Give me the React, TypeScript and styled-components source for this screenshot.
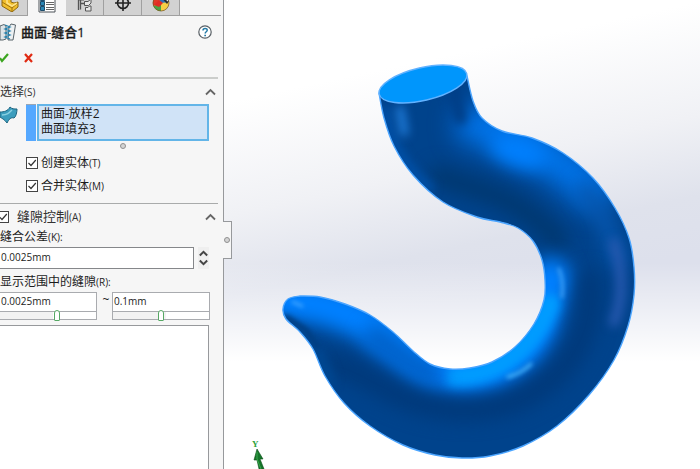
import React, { useState } from "react";
import styled, { createGlobalStyle } from "styled-components";

const GlobalStyle = createGlobalStyle`
  * { box-sizing: border-box; }
  body {
    margin: 0;
    background: #fff;
    color: #1c1c1c;
    font-family: "Open Sans", "Noto Sans CJK SC", sans-serif;
    font-size: 12px;
    line-height: 16px;
  }
  button, input { font: inherit; color: inherit; }
  ul { list-style: none; margin: 0; padding: 0; }
`;

const Page = styled.div`
  display: flex;
  min-height: 100vh;
  overflow: hidden;
`;

const Panel = styled.aside`
  flex: 0 0 224px;
  display: flex;
  flex-direction: column;
  background: #f6f6f6;
  border-right: 1px solid #97999c;
`;

const TabBar = styled.div`
  display: flex;
  height: 16px;
  margin-right: 2px;
`;

const Tab = styled.button<{ $active?: boolean; $first?: boolean }>`
  flex: 0 0 ${(p) => (p.$first ? 28 : 38)}px;
  display: flex;
  justify-content: ${(p) => (p.$first ? "flex-start" : "center")};
  align-items: flex-end;
  padding: 0 0 3px;
  overflow: hidden;
  border: 0;
  border-right: ${(p) => (p.$active ? 0 : 1)}px solid #a0a0a0;
  border-bottom: ${(p) => (p.$active ? 0 : 1)}px solid #a0a0a0;
  background: ${(p) => (p.$active ? "transparent" : "#d2d2d2")};
  svg { flex: none; }
`;

const TabFiller = styled.div`
  flex: 1;
  border-bottom: 1px solid #a0a0a0;
`;

const TitleRow = styled.header`
  display: flex;
  align-items: center;
  height: 32px;
  padding-right: 11px;
`;

const Title = styled.h1`
  flex: 1;
  margin: 0 0 0 5px;
  font-size: 13px;
  line-height: 16px;
  font-weight: 500;
  -webkit-text-stroke: 0.3px currentColor;
`;

const IconButton = styled.button`
  display: flex;
  padding: 0;
  border: 0;
  background: none;
`;

const Confirm = styled.div`
  display: flex;
  align-items: center;
  gap: 15px;
  height: 20px;
`;

const Section = styled.section<{ $strong?: boolean; $grow?: boolean }>`
  display: flex;
  flex-direction: column;
  flex: ${(p) => (p.$grow ? 1 : "none")};
  margin-top: 9px;
  margin-right: 5px;
  border-top: ${(p) => (p.$strong ? "2px solid #cbcdcb" : "1px solid #a9abab")};
`;

const SectionHead = styled.div`
  display: flex;
  align-items: center;
  height: 25px;
  padding-right: 2px;
`;

const SectionTitle = styled.h2`
  flex: 1;
  margin: 0;
  font-size: 12px;
  line-height: 16px;
  font-weight: 400;
  color: #333;
`;

const Key = styled.span`
  font-size: 10px;
`;

const SelectionRow = styled.div`
  display: flex;
  padding-right: 9px;
`;

const SurfaceSlot = styled.div`
  flex: 0 0 26px;
  padding-top: 2px;
`;

const Swatch = styled.div`
  flex: 0 0 10px;
  margin-right: 1px;
  background: #55a8ff;
  border-top: 1px solid #9aa6b4;
`;

const SelectionList = styled.ul`
  flex: 1;
  height: 37px;
  padding: 0 2px;
  border: 2px solid #63b5e8;
  background: #d0e3f7;
  line-height: 15px;
`;

const Grip = styled.div`
  display: flex;
  justify-content: center;
  padding: 2px 0 0 27px;
`;

const Dot = styled.span`
  width: 6px;
  height: 6px;
  border: 1px solid #909090;
  border-radius: 50%;
  background: #d4d4d4;
`;

const CheckList = styled.div`
  display: flex;
  flex-direction: column;
  gap: 7px;
  margin-top: 6px;
  padding-left: 26px;
`;

const CheckLabel = styled.label<{ $head?: boolean }>`
  display: flex;
  align-items: center;
  gap: ${(p) => (p.$head ? 8 : 3)}px;
  font-size: ${(p) => (p.$head ? 13 : 12)}px;
  color: ${(p) => (p.$head ? "#333" : "inherit")};
`;

const Check = styled.input`
  appearance: none;
  flex: none;
  width: 12px;
  height: 12px;
  margin: 0;
  border: 1px solid #444;
  background: #fff;
  &:checked {
    background: #fff
      url("data:image/svg+xml,%3Csvg xmlns='http://www.w3.org/2000/svg' viewBox='0 0 10 10'%3E%3Cpath d='M1.5 5L4 7.5L8.8 2' fill='none' stroke='%23333' stroke-width='1.2'/%3E%3C/svg%3E");
  }
`;

const CheckHeadSlot = styled.div`
  flex: 1;
  margin-left: -3px;
`;

const FieldLabel = styled.label`
  display: block;
  height: 18px;
`;

const SpinRow = styled.div`
  display: flex;
  gap: 4px;
  margin-bottom: 5px;
  padding-right: 9px;
`;

const TextField = styled.input<{ $ranged?: boolean }>`
  display: block;
  flex: 1;
  width: 100%;
  min-width: 0;
  height: ${(p) => (p.$ranged ? 19 : 22)}px;
  padding: 0 1px 3px;
  border: 1px solid #8b8d90;
  border-width: ${(p) => (p.$ranged ? "0 0 1px" : "1px")};
  border-left-width: 0;
  border-color: ${(p) => (p.$ranged ? "#a9abaf" : "#85878a")};
  background: #fff;
  font-size: 10px;
  outline: 0;
`;

const Spinner = styled.div`
  flex: 0 0 11px;
  display: flex;
  flex-direction: column;
  justify-content: space-evenly;
  align-items: center;
  background: #efefef;
`;

const RangeRow = styled.div`
  display: flex;
  padding-right: 8px;
  margin-bottom: 5px;
`;

const RangeField = styled.div<{ $open?: boolean }>`
  flex: 1;
  height: 28px;
  border: 1px solid #a9abaf;
  border-left-width: ${(p) => (p.$open ? 0 : 1)}px;
  background: #fff;
`;

const Tilde = styled.span`
  flex: 0 0 15px;
  padding-left: 3px;
  text-align: center;
`;

const Slider = styled.input`
  appearance: none;
  display: block;
  width: 100%;
  height: 7px;
  margin: 0;
  background: linear-gradient(to right, #f2f2f2 55%, #fff 55%);
  &::-webkit-slider-thumb {
    appearance: none;
    width: 6px;
    height: 11px;
    border: 1px solid #56a864;
    border-radius: 3px 3px 1px 1px;
    background: #fff;
  }
`;

const ResultList = styled.ul`
  flex: 1;
  margin-right: 9px;
  border: 1px solid #97999c;
  border-width: 1px 1px 0 0;
  background: #fff;
`;

const Viewport = styled.main`
  position: relative;
  flex: 1;
  min-width: 0;
  background:
    linear-gradient(180deg, transparent 56%, #fff 77%),
    linear-gradient(168deg, #fff 18%, #f0f1f5 38%, #dfe2ec 52%, #dde0ec 62%);
`;

const PanelHandle = styled.button`
  position: absolute;
  top: 221px;
  left: -1px;
  display: flex;
  align-items: center;
  width: 9px;
  height: 38px;
  padding: 0 0 0 1px;
  border: 1px solid #97999c;
  border-left: 0;
  background: #f6f6f6;
`;

const Scene = styled.svg`
  display: block;
  width: 100%;
  height: 100vh;
`;

type Point = [number, number];

const curve = (pts: Point[]) => {
  let d = `M${pts[0]}`;
  for (let i = 0; i < pts.length - 1; i++) {
    const a = pts[Math.max(i - 1, 0)];
    const b = pts[i];
    const c = pts[i + 1];
    const e = pts[Math.min(i + 2, pts.length - 1)];
    d += `C${b[0] + (c[0] - a[0]) / 6} ${b[1] + (c[1] - a[1]) / 6} ${c[0] - (e[0] - b[0]) / 6} ${c[1] - (e[1] - b[1]) / 6} ${c[0]} ${c[1]}`;
  }
  return d;
};

const outer: Point[] = [
  [467, 76], [473, 101], [482, 118], [502, 131], [532, 138], [563, 153], [593, 178], [615, 208],
  [629, 238], [634, 267], [634, 295], [628, 326], [614, 360], [589, 395], [557, 426], [523, 446],
  [490, 456], [462, 458], [435, 455], [403, 445], [370, 426], [344, 403], [325, 376], [313, 349],
  [300, 332], [286, 319], [283, 309], [288, 299], [300, 296],
];

const inner: Point[] = [
  [300, 296], [320, 297], [345, 304], [370, 315], [393, 332], [413, 351], [430, 364], [450, 369],
  [470, 368], [492, 362], [515, 347], [534, 324], [544, 300], [545, 280], [542, 260], [533, 241],
  [518, 228], [500, 222], [477, 217], [443, 202], [413, 175], [394, 146], [384, 118], [379, 93],
];

const hook = curve(outer) + curve(inner).replace(/^M[^C]*/, "") + "Z";

const blurs = { fine: 2, mid: 5, soft: 9, wide: 13 };

const HookScene = () => (
  <Scene viewBox="224 0 476 469" preserveAspectRatio="xMinYMin slice" role="img" aria-label="曲面-缝合1">
    <defs>
      <clipPath id="hook"><path d={hook} /></clipPath>
      {Object.entries(blurs).map(([id, deviation]) => (
        <filter key={id} id={id} filterUnits="userSpaceOnUse" x="224" y="0" width="476" height="500" colorInterpolationFilters="sRGB">
          <feGaussianBlur stdDeviation={deviation} />
        </filter>
      ))}
    </defs>
    <g clipPath="url(#hook)" fill="none" strokeLinecap="round">
      <path d={hook} fill="#00438c" />
      <path d="M475 125C510 130 555 155 592 190" stroke="#0074ea" strokeWidth="40" filter="url(#wide)" />
      <ellipse cx="518" cy="152" rx="30" ry="15" transform="rotate(18 518 152)" fill="#0080ff" filter="url(#soft)" />
      <path d="M585 190C602 212 612 235 618 260" stroke="#0656ae" strokeWidth="18" filter="url(#soft)" />
      <path d="M452 80L460 118" stroke="#003f88" strokeWidth="14" filter="url(#mid)" />
      <path d="M440 176C480 192 520 196 558 240" stroke="#003870" strokeWidth="22" filter="url(#soft)" />
      <path d="M385 110C388 140 405 168 430 188" stroke="#0053ad" strokeWidth="8" filter="url(#mid)" />
      <path d="M285 301C330 300 375 322 416 356S515 374 538 325L551 278" stroke="#0080ff" strokeWidth="40" filter="url(#soft)" />
      <path d="M455 377C500 376 534 345 550 304" stroke="#009cff" strokeWidth="20" filter="url(#mid)" />
      <path d="M376 338C394 352 410 364 430 374" stroke="#0062ca" strokeWidth="26" filter="url(#soft)" />
      <path d="M328 364C345 366 356 373 380 386C430 417 510 424 562 370C586 340 592 315 590 280" stroke="#00397a" strokeWidth="22" filter="url(#soft)" />
      <path d="M286 323C302 335 320 352 328 380" stroke="#004791" strokeWidth="14" filter="url(#mid)" />
      <path d="M614 243C624 275 622 302 614 322" stroke="#2558ae" strokeWidth="10" filter="url(#mid)" />
      <path d="M400 110L404 132" stroke="#1d79d6" strokeWidth="9" filter="url(#mid)" />
      <path d="M559 269C563 279 563 288 562 297" stroke="#42a3f6" strokeWidth="3" filter="url(#fine)" />
      <path d="M508 377C519 374 526 369 531 364" stroke="#4ebcff" strokeWidth="3" filter="url(#fine)" />
      <path d="M293 302L302 306" stroke="#45a8ff" strokeWidth="3" filter="url(#fine)" />
      <path d="M286 317L306 330L318 347" stroke="#003d80" strokeWidth="4" filter="url(#fine)" />
    </g>
    <path d={hook} fill="none" stroke="#4ba5ff" strokeWidth="1.4" />
    <ellipse cx="423" cy="84" rx="45" ry="16.4" transform="rotate(-13 423 84)" fill="#0096fc" stroke="#62b2ff" strokeWidth="1.4" />
    <text x="252" y="447" fontSize="9" fontFamily="Liberation Serif, serif" fontWeight="700" fill="#2ea33d">Y</text>
    <path d="M257 449L263 459L260 459L264 469H259L257 460L254 460Z" fill="#16752a" stroke="#0c4f1a" strokeWidth="0.6" />
    <path d="M257 452V459L261 469" fill="none" stroke="#39a84c" strokeWidth="1" />
  </Scene>
);

const PartIcon = () => (
  <svg width="19" height="18" viewBox="0 0 19 18">
    <path d="M2 1L6 0L11 3V8L14 9L18 8V13L12 18L2 12Z" fill="#f0bd2c" stroke="#8c6710" />
    <path d="M2 8L12 14L18 9M12 14V18" fill="none" stroke="#a0740f" />
    <path d="M2 3L7 5V9L12 12L17 9" fill="none" stroke="#ffe283" strokeWidth="1.6" />
  </svg>
);

const PropertyIcon = () => (
  <svg width="18" height="18" viewBox="0 0 18 18">
    <path d="M1 0H17V17H1Z" fill="#fff" stroke="#4c5358" />
    {[1, 6, 11].map((y) => (
      <g key={y}>
        <path d={`M2.500 ${y + 0.5}h4v4h-4z`} fill="#2a86b5" stroke="#1d4c6b" />
        <path d={`M8 ${y + 1.5}h8M8 ${y + 3.5}h8`} stroke="#666" />
      </g>
    ))}
  </svg>
);

const ConfigIcon = () => (
  <svg width="16" height="18" viewBox="0 0 16 18" fill="#e9e9e9" stroke="#555">
    <path d="M1 0H7V6H1Z" />
    <path d="M3.500 6V15.500M3.500 9.500H7M1.500 6V16" fill="none" strokeWidth="1.300" />
    <path d="M7.500 7.500H11L14 5V9L11.500 11.500H7.500ZM8.500 13.500H11L12.500 12H14V17H8.500Z" />
  </svg>
);

const TargetIcon = () => (
  <svg width="18" height="18" viewBox="0 0 18 18" fill="none" stroke="#222" strokeWidth="1.600">
    <circle cx="9" cy="9" r="5.500" />
    <path d="M9 0V17M1 9H17" />
  </svg>
);

const AppearanceIcon = () => (
  <svg width="18" height="18" viewBox="0 0 18 18">
    <circle cx="9" cy="9" r="8" fill="#f5cf45" />
    <path d="M9 9L5 2A8 8 0 0 0 1.500 12Z" fill="#e23a28" />
    <path d="M9 9L1.500 12A8 8 0 0 0 9 17Z" fill="#4aa546" />
    <path d="M9 9L5 2A8 8 0 0 1 17 8Z" fill="#2f72b8" />
    <path d="M2 11L7 6L11 9L7 13Z" fill="#e02d24" />
    <path d="M8 2L15 10L17 7L13 1Z" fill="#282c30" />
    <path d="M12 2L16 7" stroke="#dfe4e8" strokeWidth="1.500" />
    <circle cx="9" cy="9" r="8" fill="none" stroke="#73521f" strokeWidth="0.700" />
  </svg>
);

const KnitIcon = () => (
  <svg width="16" height="18" viewBox="0 0 16 18">
    <path d="M0 3L4 1.500L6 3V16L3 17H0Z" fill="#dde4e8" stroke="#59646b" />
    <path d="M9 4L11 1L15.500 2L13 17H8Z" fill="#eef1f3" stroke="#59646b" />
    <path d="M5 2L10 4L5 6L10 8L5 10L10 12L5 14L10 16" fill="none" stroke="#2581ad" strokeWidth="1.300" />
  </svg>
);

const HelpIcon = () => (
  <svg width="14" height="14" viewBox="0 0 14 14" fill="none">
    <circle cx="7" cy="7" r="6.200" fill="#fff" stroke="#596066" strokeWidth="1.200" />
    <path d="M5 5.500C5 2.800 9.300 2.900 9.200 5.300C9.200 6.800 7.200 6.700 7.200 8.500" stroke="#2279a6" strokeWidth="1.500" />
    <path d="M6.300 9.800H8V11.300H6.300Z" fill="#2279a6" />
  </svg>
);

const OkIcon = () => (
  <svg width="9" height="10" viewBox="0 0 9 10">
    <path d="M0 5L2 8L8 1" fill="none" stroke="#3ba51f" strokeWidth="2.200" />
  </svg>
);

const CancelIcon = () => (
  <svg width="9" height="10" viewBox="0 0 9 10">
    <path d="M1 1L8 9M8 1L1 9" fill="none" stroke="#e02a12" strokeWidth="2.200" />
  </svg>
);

const SurfaceIcon = () => (
  <svg width="18" height="18" viewBox="0 0 18 18">
    <path d="M0 6C4 6 8 5 10 1C12 3 14 3 17 3C17 6 16 11 14 12C11 11 9 13 7 17C5 14 3 13 0 11Z" fill="#3c9dbd" stroke="#1d6480" />
    <path d="M2 9C7 9 9 7 12 4" fill="none" stroke="#8ad0e2" strokeWidth="1.500" />
  </svg>
);

const Chevron = ({ down, small }: { down?: boolean; small?: boolean }) => (
  <svg width={small ? 9 : 11} height={small ? 7 : 8} viewBox="0 0 11 8">
    <path d={down ? "M1 1.500L5.500 6L10 1.500" : "M1 6.500L5.500 2L10 6.500"} fill="none" stroke={small ? "#444" : "#666"} strokeWidth={small ? 2.4 : 1.8} />
  </svg>
);

const options = [
  { id: "solid", text: "创建实体", hotkey: "(T)" },
  { id: "merge", text: "合并实体", hotkey: "(M)" },
];

export default function App() {
  const [tolerance, setTolerance] = useState("0.0025mm");
  const [low, setLow] = useState("0.0025mm");
  const [high, setHigh] = useState("0.1mm");

  return (
    <>
      <GlobalStyle />
      <Page>
        <Panel>
          <TabBar>
            <Tab $first aria-label="FeatureManager"><PartIcon /></Tab>
            <Tab $active aria-label="PropertyManager"><PropertyIcon /></Tab>
            <Tab aria-label="ConfigurationManager"><ConfigIcon /></Tab>
            <Tab aria-label="DimXpertManager"><TargetIcon /></Tab>
            <Tab aria-label="DisplayManager"><AppearanceIcon /></Tab>
            <TabFiller />
          </TabBar>
          <TitleRow>
            <KnitIcon />
            <Title>曲面-缝合1</Title>
            <IconButton aria-label="帮助"><HelpIcon /></IconButton>
          </TitleRow>
          <Confirm>
            <IconButton aria-label="确定"><OkIcon /></IconButton>
            <IconButton aria-label="取消"><CancelIcon /></IconButton>
          </Confirm>

          <Section $strong>
            <SectionHead>
              <SectionTitle>选择<Key>(S)</Key></SectionTitle>
              <IconButton aria-label="折叠选择"><Chevron /></IconButton>
            </SectionHead>
            <SelectionRow>
              <SurfaceSlot><SurfaceIcon /></SurfaceSlot>
              <Swatch />
              <SelectionList role="listbox" aria-label="选择">
                <li role="option">曲面-放样2</li>
                <li role="option">曲面填充3</li>
              </SelectionList>
            </SelectionRow>
            <Grip><Dot /></Grip>
            <CheckList>
              {options.map((o) => (
                <CheckLabel key={o.id} htmlFor={o.id}>
                  <Check type="checkbox" id={o.id} defaultChecked />
                  <span>{o.text}<Key>{o.hotkey}</Key></span>
                </CheckLabel>
              ))}
            </CheckList>
          </Section>

          <Section $grow>
            <SectionHead>
              <CheckHeadSlot>
                <CheckLabel $head htmlFor="gap">
                  <Check type="checkbox" id="gap" defaultChecked />
                  <span>缝隙控制<Key>(A)</Key></span>
                </CheckLabel>
              </CheckHeadSlot>
              <IconButton aria-label="折叠缝隙控制"><Chevron /></IconButton>
            </SectionHead>
            <FieldLabel htmlFor="tolerance">缝合公差<Key>(K):</Key></FieldLabel>
            <SpinRow>
              <TextField id="tolerance" value={tolerance} onChange={(e) => setTolerance(e.target.value)} />
              <Spinner>
                <IconButton aria-label="增加"><Chevron small /></IconButton>
                <IconButton aria-label="减少"><Chevron small down /></IconButton>
              </Spinner>
            </SpinRow>
            <FieldLabel htmlFor="low">显示范围中的缝隙<Key>(R):</Key></FieldLabel>
            <RangeRow>
              <RangeField $open>
                <TextField $ranged id="low" value={low} onChange={(e) => setLow(e.target.value)} />
                <Slider type="range" aria-label="最小缝隙" defaultValue={60} />
              </RangeField>
              <Tilde>~</Tilde>
              <RangeField>
                <TextField $ranged aria-label="最大缝隙值" value={high} onChange={(e) => setHigh(e.target.value)} />
                <Slider type="range" aria-label="最大缝隙" defaultValue={50} />
              </RangeField>
            </RangeRow>
            <ResultList aria-label="缝隙" />
          </Section>
        </Panel>
        <Viewport>
          <HookScene />
          <PanelHandle aria-label="隐藏面板"><Dot /></PanelHandle>
        </Viewport>
      </Page>
    </>
  );
}
